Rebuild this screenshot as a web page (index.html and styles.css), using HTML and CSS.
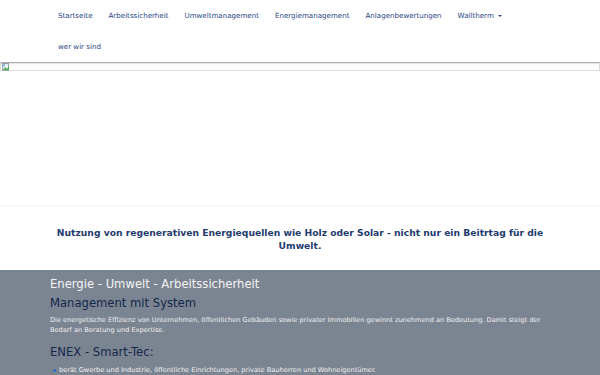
FILE: index.html
```html
<!DOCTYPE html>
<html lang="de">
<head>
<meta charset="UTF-8">
<title>ENEX - Smart-Tec</title>
<link rel="stylesheet" href="styles.css">
</head>
<body>
<nav class="navbar">
    <ul class="nav">
        <li><a href="#">Startseite</a></li>
        <li><a href="#">Arbeitssicherheit</a></li>
        <li><a href="#">Umweltmanagement</a></li>
        <li><a href="#">Energiemanagement</a></li>
        <li><a href="#">Anlagenbewertungen</a></li>
        <li><a href="#">Walltherm <span class="caret"></span></a></li>
        <li><a href="#">wer wir sind</a></li>
    </ul>
</nav>
<div class="banner">
    <div class="broken">
        <svg width="8" height="8" viewBox="0 0 8 8">
            <rect x="0.5" y="0.5" width="6" height="7" fill="#eef3f8" stroke="#9aa8b8"/>
            <path d="M1 7 L3 4 L5 6 L7 3 L7 7 Z" fill="#4caf50"/>
            <circle cx="2" cy="2.3" r="1" fill="#6aa0d8"/>
        </svg>
    </div>
</div>
<div class="claim">
    <h3>Nutzung von regenerativen Energiequellen wie Holz oder Solar - nicht nur ein Beitrtag für die Umwelt.</h3>
</div>
<div class="content">
    <div class="container">
        <h1>Energie - Umwelt - Arbeitssicherheit</h1>
        <h2>Management mit System</h2>
        <p>Die energetische Effizienz von Unternehmen, öffentlichen Gebäuden sowie privater Immobilien gewinnt zunehmend an Bedeutung. Damit steigt der Bedarf an Beratung und Expertise.</p>
        <h2 class="sub">ENEX - Smart-Tec:</h2>
        <ul class="list">
            <li>berät Gwerbe und Industrie, öffentliche Einrichtungen, private Bauherren und Wohneigentümer.</li>
        </ul>
    </div>
</div>
</body>
</html>
```

FILE: styles.css
```css
body { font-family: "DejaVu Sans", Verdana, sans-serif; margin: 0; background: #fff; color: #fff; }
.navbar { height: 62px; background: #fff; box-shadow: 0 1px 2px rgba(0,0,0,0.3); position: relative; z-index: 1; }
.nav { list-style: none; margin: 0; padding: 0 50px; display: flex; flex-wrap: wrap; max-width: 480px; }
.nav li { height: 31px; display: flex; align-items: center; }
.nav a { font-size: 7.1px; color: #26467f; text-decoration: none; padding: 0 8px; }
.caret { display: inline-block; width: 0; height: 0; border-left: 2px solid transparent; border-right: 2px solid transparent; border-top: 2px solid #26467f; vertical-align: middle; margin-left: 2px; }
.banner { height: 143px; border-bottom: 1px solid #f4f4f4; }
.broken { height: 7px; border: 1px solid #dcdcdc; display: flex; align-items: center; padding-left: 1px; }
.claim { height: 64px; display: flex; align-items: center; justify-content: center; padding: 2px 50px 0; box-sizing: border-box; }
.claim h3 { margin: 0; font-size: 9.2px; line-height: 13.5px; font-weight: bold; color: #1f3b6f; text-align: center; }
.content { background: #7b8491; height: 105px; overflow: hidden; }
.container { padding: 7px 50px 0; }
h1 { margin: 0; font-size: 11.6px; font-weight: normal; line-height: 15px; color: #f4f4f4; }
h2 { margin: 4px 0 0; font-size: 11.6px; font-weight: normal; line-height: 15px; color: #14284c; }
h2.sub { margin-top: 10px; }
p { margin: 5px 0 0; font-size: 6.6px; line-height: 9.5px; color: #f1f1f1; }
.list { margin: 6px 0 0; padding-left: 9px; list-style: none; }
.list li { font-size: 6.6px; line-height: 9.5px; color: #f1f1f1; position: relative; }
.list li::before { content: ""; position: absolute; left: -6px; top: 3px; width: 3px; height: 3px; border-radius: 50%; background: #2f6fc7; }
```
